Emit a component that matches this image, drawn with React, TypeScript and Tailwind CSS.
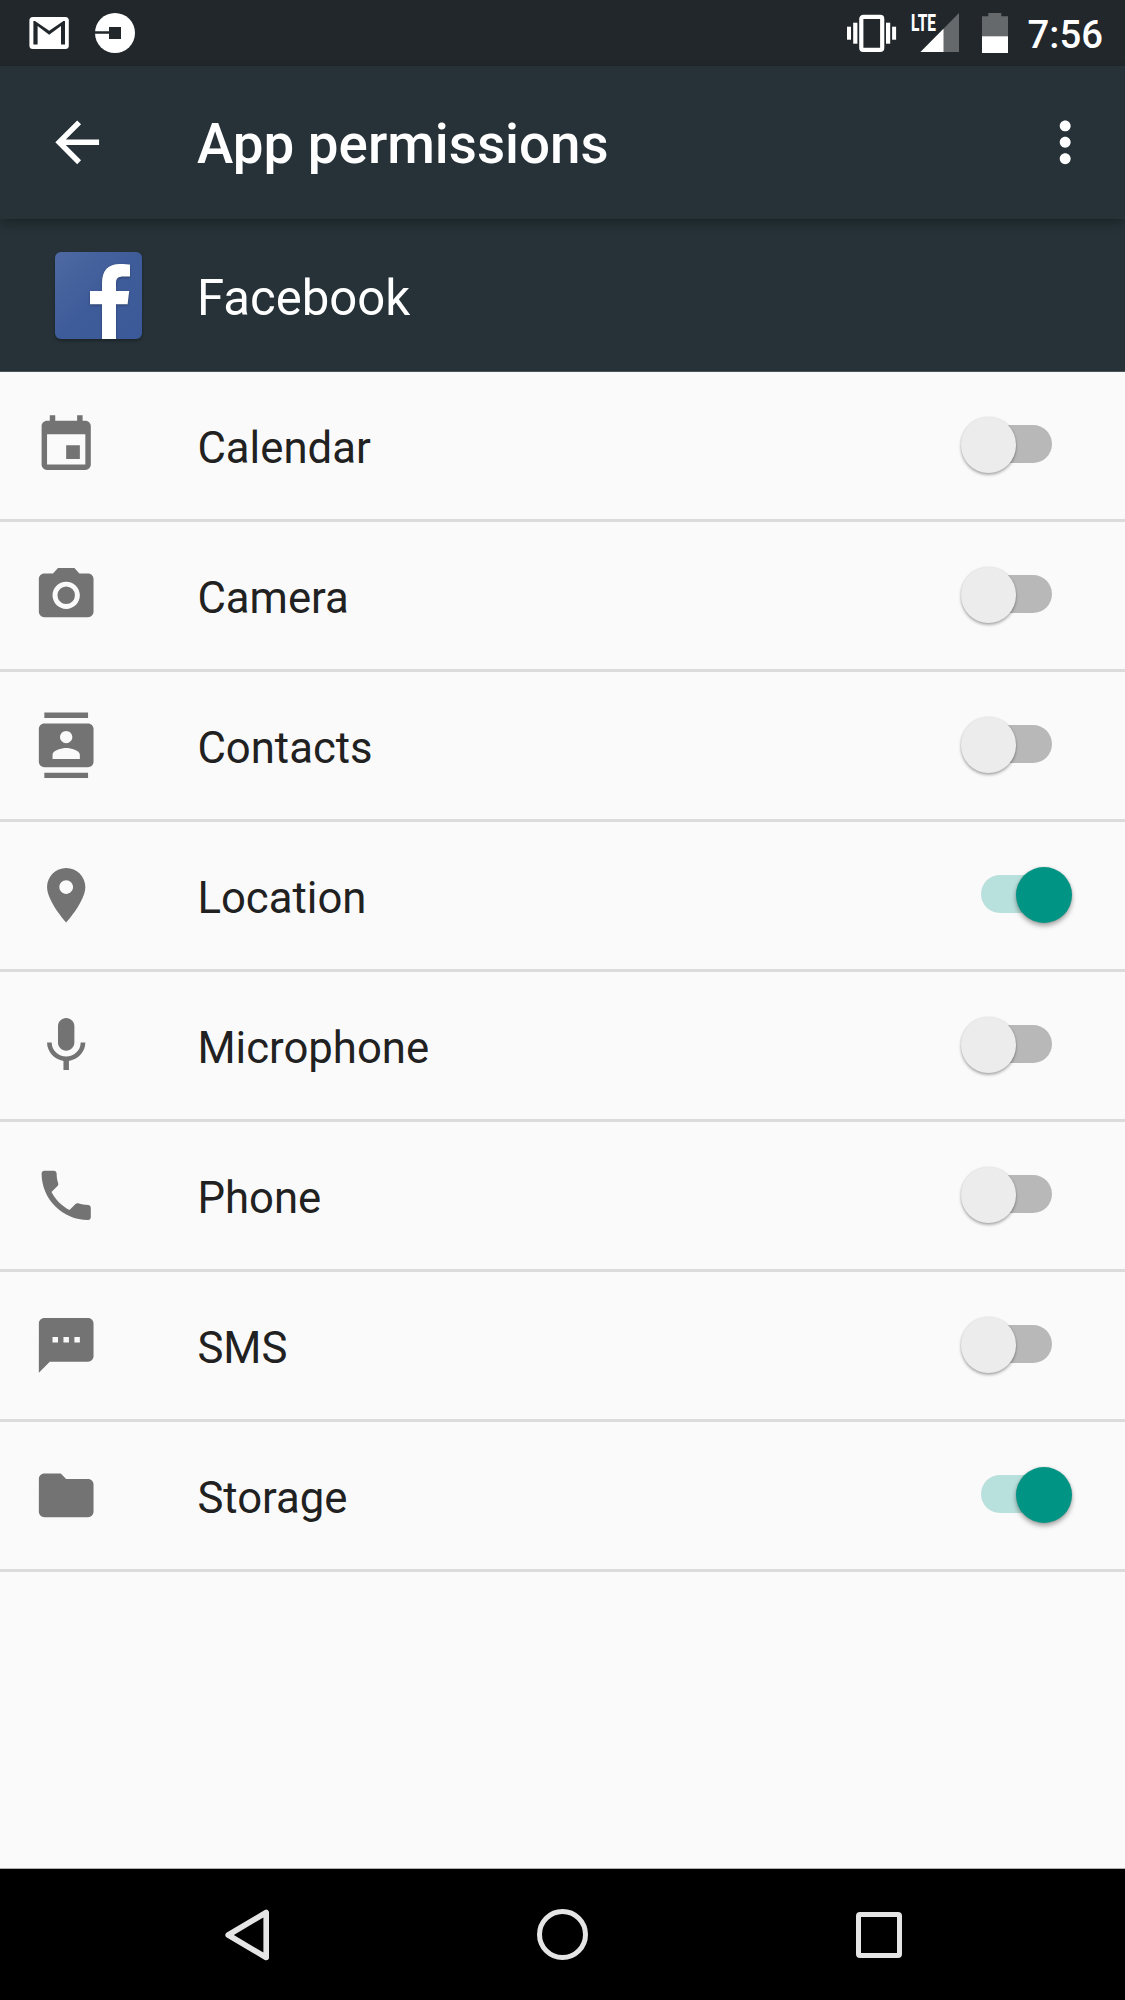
import { useState } from "react";

const ICONS = {
  calendar: "M17 12h-5v5h5v-5zM16 1v2H8V1H6v2H5c-1.11 0-1.99.9-1.99 2L3 19c0 1.1.89 2 2 2h14c1.1 0 2-.9 2-2V5c0-1.1-.9-2-2-2h-1V1h-2zm3 18H5V8h14v11z",
  camera: "M12 8.8a3.2 3.2 0 1 0 0 6.4a3.2 3.2 0 1 0 0-6.4zM9 2L7.17 4H4c-1.1 0-2 .9-2 2v12c0 1.1.9 2 2 2h16c1.1 0 2-.9 2-2V6c0-1.1-.9-2-2-2h-3.17L15 2H9zm3 15c-2.76 0-5-2.24-5-5s2.24-5 5-5 5 2.24 5 5-2.24 5-5 5z",
  contacts: "M20 0H4v2h16V0zM4 24h16v-2H4v2zM20 4H4c-1.1 0-2 .9-2 2v12c0 1.1.9 2 2 2h16c1.1 0 2-.9 2-2V6c0-1.1-.9-2-2-2zm-8 2.75c1.24 0 2.25 1.01 2.25 2.25s-1.01 2.25-2.25 2.25S9.75 10.24 9.75 9 10.76 6.75 12 6.75zM17 17H7v-1.5c0-1.67 3.33-2.5 5-2.5s5 .83 5 2.5V17z",
  place: "M12 2C8.13 2 5 5.13 5 9c0 5.25 7 13 7 13s7-7.75 7-13c0-3.87-3.13-7-7-7zm0 9.5c-1.38 0-2.5-1.12-2.5-2.5s1.12-2.5 2.5-2.5 2.5 1.12 2.5 2.5-1.12 2.5-2.5 2.5z",
  mic: "M12 14c1.66 0 2.99-1.34 2.99-3L15 5c0-1.66-1.34-3-3-3S9 3.34 9 5v6c0 1.66 1.34 3 3 3zm5.3-3c0 3-2.54 5.1-5.3 5.1S6.7 14 6.7 11H5c0 3.41 2.72 6.23 6 6.72V21h2v-3.28c3.28-.48 6-3.3 6-6.72h-1.7z",
  phone: "M6.62 10.79c1.44 2.83 3.76 5.14 6.59 6.59l2.2-2.2c.27-.27.67-.36 1.02-.24 1.12.37 2.33.57 3.57.57.55 0 1 .45 1 1V20c0 .55-.45 1-1 1-9.39 0-17-7.61-17-17 0-.55.45-1 1-1h3.5c.55 0 1 .45 1 1 0 1.25.2 2.45.57 3.57.11.35.03.74-.25 1.02l-2.2 2.2z",
  sms: "M20 2H4c-1.1 0-1.99.9-1.99 2L2 22l4-4h14c1.1 0 2-.9 2-2V4c0-1.1-.9-2-2-2zM9 11H7V9h2v2zm4 0h-2V9h2v2zm4 0h-2V9h2v2z",
  folder: "M10 4H4c-1.1 0-1.99.9-1.99 2L2 18c0 1.1.9 2 2 2h16c1.1 0 2-.9 2-2V8c0-1.1-.9-2-2-2h-8l-2-2z",
  back: "M20 11H7.83l5.59-5.59L12 4l-8 8 8 8 1.41-1.41L7.83 13H20v-2z",
  more: "M12 8c1.1 0 2-.9 2-2s-.9-2-2-2-2 .9-2 2 .9 2 2 2zm0 2c-1.1 0-2 .9-2 2s.9 2 2 2 2-.9 2-2-.9-2-2-2zm0 6c-1.1 0-2 .9-2 2s.9 2 2 2 2-.9 2-2-.9-2-2-2z",
};

type IconName = keyof typeof ICONS;

const PERMISSIONS: { label: string; icon: IconName; granted: boolean }[] = [
  { label: "Calendar", icon: "calendar", granted: false },
  { label: "Camera", icon: "camera", granted: false },
  { label: "Contacts", icon: "contacts", granted: false },
  { label: "Location", icon: "place", granted: true },
  { label: "Microphone", icon: "mic", granted: false },
  { label: "Phone", icon: "phone", granted: false },
  { label: "SMS", icon: "sms", granted: false },
  { label: "Storage", icon: "folder", granted: true },
];

function Icon({ name }: { name: IconName }) {
  return (
    <svg className="w-[66px] h-[66px] mb-px shrink-0" viewBox="-0.14 -0.18 24.14 24.14" fill="currentColor">
      <path d={ICONS[name]} />
    </svg>
  );
}

function StatusBar() {
  return (
    <div className="h-[66px] shrink-0 bg-[#21272b] text-white flex items-center justify-between pl-[29px] pr-[22px]">
      <div className="flex items-center gap-[26px]">
        {/* Gmail */}
        <svg className="w-10 h-8" viewBox="0 0 40 32">
          <rect x="0.4" y="0" width="39.4" height="32" rx="3.5" fill="#fff" />
          <path d="M4.4 27.6V4H6L20.2 13.8L34.4 4H36V27.6H32V9L20.2 17.8L8.6 9V27.6Z" fill="#21272b" />
        </svg>
        {/* Uber */}
        <svg className="w-10 h-10" viewBox="0 0 40 40">
          <circle cx="20" cy="20" r="20" fill="#fff" />
          <path d="M0 18.3H14V14H26V26H14V20.8H0Z" fill="#21272b" />
        </svg>
      </div>
      <div className="flex items-center">
        {/* Vibrate */}
        <svg className="w-[50px] h-[38px]" viewBox="0 0 50 38" fill="#fff">
          <rect x="0" y="12.7" width="4" height="13" />
          <rect x="6.2" y="8.7" width="4.2" height="21" />
          <rect x="14.3" y="2.9" width="20.9" height="33" rx="2" fill="none" stroke="#fff" strokeWidth="4.2" />
          <rect x="39" y="8.7" width="4.2" height="21" />
          <rect x="45.1" y="12.7" width="4" height="13" />
        </svg>
        {/* LTE signal */}
        <svg className="w-12 h-[52px] mb-3 ml-[14px] overflow-visible" viewBox="0 -12 48 52">
          <path d="M9.5 39L48 0V39Z" fill="#66696b" />
          <path d="M9.5 39L32.5 15.8V39Z" fill="#fff" />
          <text x="0" y="17.8" fontSize="23.5" fontWeight="800" textLength="25" lengthAdjust="spacingAndGlyphs" fill="#fff">LTE</text>
        </svg>
        {/* Battery */}
        <svg className="w-[26px] h-10 ml-[22.5px]" viewBox="0 0 26 40">
          <path d="M6.3 0H19.3V3.3H26V40H0V3.3H6.3Z" fill="#66696b" />
          <rect x="0" y="23.3" width="26" height="16.7" fill="#fff" />
        </svg>
        <span className="ml-5 pt-1 text-[38.3px] leading-none font-medium">7:56</span>
      </div>
    </div>
  );
}

function FacebookLogo() {
  return (
    <svg className="w-[87px] h-[87px] shrink-0 rounded-md shadow-[0_2px_3px_rgba(0,0,0,0.3)]" viewBox="0 0 87 87">
      <defs>
        <linearGradient id="fb" x1="0" y1="0" x2="1" y2="1">
          <stop offset="0" stopColor="#4e69a2" />
          <stop offset="0.5" stopColor="#3f5c9a" />
          <stop offset="1" stopColor="#3b5998" />
        </linearGradient>
      </defs>
      <rect width="87" height="87" fill="url(#fb)" />
      <path className="drop-shadow-[0_1px_1px_rgba(0,0,0,0.3)]" fill="#fff"
        d="M47 87V52.3H35V39H47V31C47 18.5 53 12 65 12C70 12 75 12.6 75 12.6V24.5H68.5C63 24.5 61 26.5 61 31V39H74.2L72.6 52.3H61V87Z" />
    </svg>
  );
}

function Switch({ on, onToggle, label }: { on: boolean; onToggle: () => void; label: string }) {
  return (
    <button role="switch" aria-checked={on} aria-label={label} onClick={onToggle}
      className="relative w-[111px] h-14 mb-px shrink-0 flex items-center justify-center">
      <span className={`w-[71px] h-[38px] mb-0.5 rounded-full ${on ? "bg-[#b8e0dc]" : "bg-[#b8b8b8]"}`} />
      <span className={`absolute top-0 size-[55.5px] rounded-full ${on
        ? "right-0 bg-[#009485] shadow-[0_3px_5px_rgba(0,0,0,0.35),0_0_2px_rgba(0,0,0,0.15)]"
        : "left-0 bg-[#ececec] shadow-[0_2px_3px_rgba(0,0,0,0.3),0_0_2px_rgba(0,0,0,0.12)]"}`} />
    </button>
  );
}

export default function App() {
  const [granted, setGranted] = useState(PERMISSIONS.map(p => p.granted));

  const toggle = (i: number) => setGranted(g => g.map((v, j) => (j === i ? !v : v)));

  return (
    <div className="w-full h-[2000px] flex flex-col bg-[#fafafa] font-['Roboto',sans-serif]">
      <StatusBar />

      {/* Toolbar */}
      <header className="relative h-[153px] shrink-0 bg-[#263238] text-white flex items-center pl-11 pr-[27px] shadow-[0_4px_10px_rgba(0,0,0,0.3)]">
        <Icon name="back" />
        <h1 className="flex-1 pl-[87px] pt-1 text-[54.7px] leading-none font-medium">App permissions</h1>
        <Icon name="more" />
      </header>

      {/* App */}
      <div className="h-[153px] shrink-0 bg-[#263238] border-b border-[#4a5459] text-white flex items-center pl-[55px]">
        <FacebookLogo />
        <h2 className="pl-[55px] pt-[7px] text-[49.1px] leading-none">Facebook</h2>
      </div>

      <ul className="flex-1">
        {PERMISSIONS.map((p, i) => (
          <li key={p.label} className="h-[150px] flex items-center border-b-[3px] border-[#dbdbdb] pl-[33px] pr-[53.5px] text-[#737373]">
            <Icon name={p.icon} />
            <span className="flex-1 pl-[98.4px] pt-1.5 text-[43.7px] leading-none text-[#212121]">{p.label}</span>
            <Switch on={granted[i]} onToggle={() => toggle(i)} label={p.label} />
          </li>
        ))}
      </ul>

      {/* Navigation bar */}
      <nav className="h-[132px] shrink-0 bg-black border-t border-[#b0b0b0] pl-[88.5px] pr-[87.5px] flex items-center">
        <div className="flex-1 flex justify-center">
          <svg className="w-[52px] h-[52px]" viewBox="0 0 52 52" fill="none" stroke="#e5e5e5" strokeWidth="5.6" strokeLinejoin="round">
            <path d="M45.2 3.5V48.5L7.2 26Z" />
          </svg>
        </div>
        <div className="flex-1 flex justify-center">
          <div className="size-[51px] rounded-full border-[5.5px] border-[#e5e5e5]" />
        </div>
        <div className="flex-1 flex justify-center">
          <div className="size-[46px] rounded-[4px] border-[5.5px] border-[#e5e5e5]" />
        </div>
      </nav>
    </div>
  );
}
